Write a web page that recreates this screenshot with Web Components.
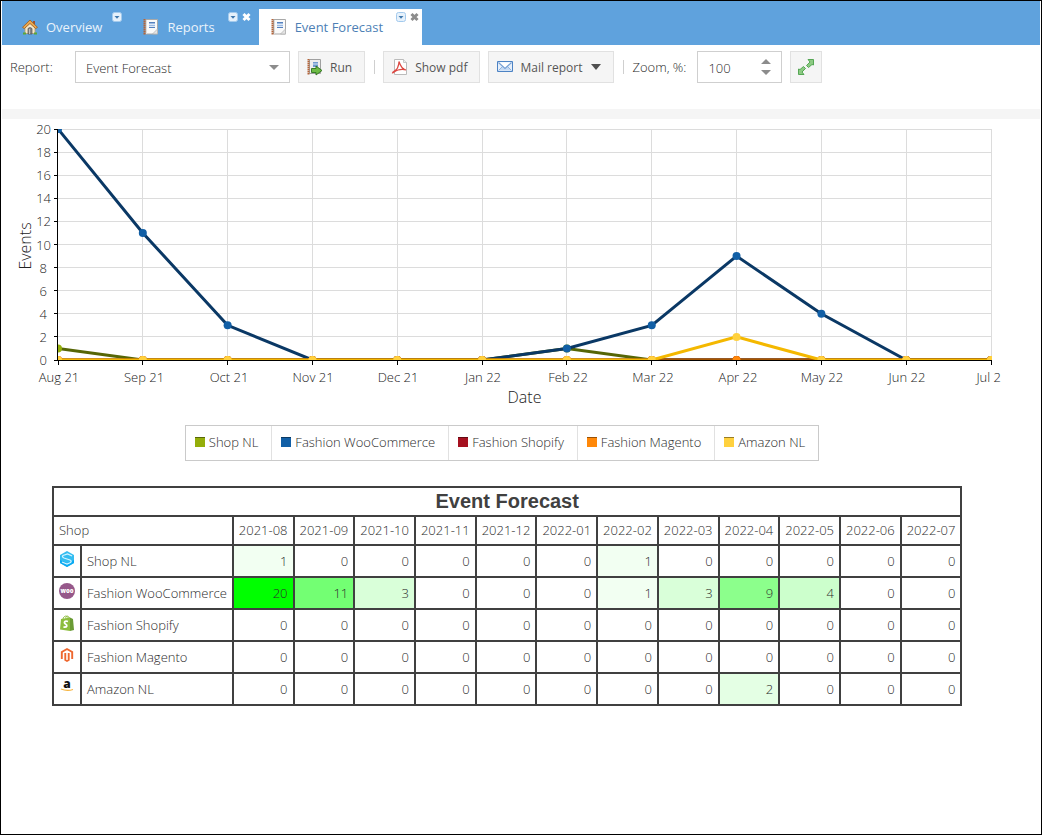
<!DOCTYPE html>
<html lang="en">
<head>
<meta charset="utf-8">
<title>Event Forecast</title>
<style>
    * { box-sizing: border-box; }
    html { height: 100%; }
    body {
        margin: 0;
        min-height: 100%;
        padding: 0 1px;
        border: 1px solid #000;
        background: #fff;
        font: 300 13px/17px "Open Sans", sans-serif;
        color: #2c2c2c;
    }
</style>
</head>
<body>
<tab-bar>
    <app-tab icon="home">Overview</app-tab>
    <app-tab icon="report" closable>Reports</app-tab>
    <app-tab icon="report" closable active>Event Forecast</app-tab>
</tab-bar>
<report-toolbar></report-toolbar>
<report-view>
    <line-chart></line-chart>
    <chart-legend></chart-legend>
    <forecast-table></forecast-table>
</report-view>

<script>
const ICONS = {
    home: `<path d="M11 2h2v4l-2-2z" fill="#a0522d"/>
        <path d="M3 8v6.500h10V8L8 3.500z" fill="#f3e8ca" stroke="#b99a68" stroke-width=".8"/>
        <path d="M0.500 8.300 8 1l7.500 7.300-1.800 1.300L8 4.500 2.300 9.600z" fill="#e9a64e" stroke="#9c6426" stroke-width=".9"/>
        <path d="M6 15V9.500q2-2 4 0V15z" fill="#858585" stroke="#555" stroke-width=".7"/>
        <path d="M7.500 10v5" stroke="#bbb"/>
        <path d="M1 13.500h3v2H1zM12 13.500h3v2h-3z" fill="#59a63a"/>`,
    report: `<path d="M2.500.500h12v14.500h-12z" fill="#fafafa" stroke="#a8a8a8"/>
        <path d="M14.500 10v5H9.500z" fill="#e4e4e4" stroke="#b5b5b5" stroke-width=".8"/>
        <path d="M1.500 0v16" stroke="#b4653a" stroke-width="2" stroke-dasharray="1.500 .5"/>
        <path d="M3.500 1v14" stroke="#ddd"/>
        <path d="M6 3.500h6v5H6z" fill="#9dbbe2"/>
        <path d="M6 5.500h6M6 7.500h6" stroke="#eef4fb" stroke-width=".8"/><path d="M6 3.500h6M6 8.500h6" stroke="#5580bd"/>`,
    run: `<path d="M2.500.500h11v14h-11z" fill="#eee" stroke="#a0a0a0"/>
        <path d="M1.500 0v16" stroke="#b4653a" stroke-width="2" stroke-dasharray="1.500 .5"/>
        <path d="M6 3h5v5H6z" fill="#6f9bd0"/><path d="M6 5h5" stroke="#eef4fb" stroke-width=".8"/>
        <path d="M4.500 9.500H9V7l6 4.500L9 16v-2.500H4.500z" fill="#6dbb45" stroke="#2b721b" stroke-width=".9"/>`,
    pdf: `<path d="M2.500.500h9l3 3v12h-12z" fill="#fff" stroke="#bbb"/>
        <path d="M11.500.500v3h3" fill="#eee" stroke="#bbb" stroke-width=".8"/>
        <path d="M7 2.500c1.500 5 3 7.500 7 8.500-3-1-6-.500-8 0-3 1-4.500 3-5.500 3 0-1.500 4-2.500 5-5C6.500 6.500 7 4.500 7 2.500z" fill="none" stroke="#dc4842" stroke-width="1.200"/>`,
    mail: `<path d="M.500 2.500h15v10H.500z" fill="#e7f0fb" stroke="#4d83c4"/>
        <path d="M1.500 11.500 6 7l2 1.500L10 7l4.500 4.500" fill="#c5daf4" stroke="#8eb3df"/>
        <path d="M1.500 3.500 8 9.500l6.500-6" fill="#fff" stroke="#77a1d5" stroke-width="1.200"/>`,
    expand: `<path d="M10 .500h5.500V6l-1.500-.5-3.500 3-2-2L12 3z" fill="#8dca83" stroke="#4aa04a" stroke-width=".9"/>
        <path d="M6 15.500H.500V10l1.500.5 3.500-3 2 2L4 13z" fill="#8dca83" stroke="#4aa04a" stroke-width=".9"/>`,
    shop: `<path d="M8 0l7 4v8l-7 4-7-4V4z" fill="#35bdf1"/><path d="M1 9l7 3 7-3v3l-7 4-7-4z" fill="#0aa9f2"/>
        <path d="M13 5 8.500 3 4 4.500Q2.500 6 5 7l6 2q2 1 .5 2.500L8 13l-5-2" fill="none" stroke="#d3f4ff" stroke-width="1.300"/>`,
    woo: `<circle cx="8" cy="8" r="8" fill="#96588a"/>
        <text x="8" y="10" text-anchor="middle" font-family="Open Sans, sans-serif" font-weight="800" font-size="6" fill="#fff">woo</text>`,
    shopify: `<path d="M2 4 11 2.500V16L1 14.500z" fill="#8dbd3d"/><path d="M11 2.500l3 1.500 1 11-4 1z" fill="#6a9b35"/>
        <path d="M4 4C4.500 1 8-.500 9.500 3.500M6.500 3.500C7 1 9 0 10.500 3" fill="none" stroke="#8dbd3d" stroke-width="1"/>
        <path d="M9 6.500C5.500 5.300 4.500 7.800 6.500 9S8.500 12.500 4.500 12" fill="none" stroke="#fff" stroke-width="1.800"/>`,
    magento: `<path d="M2.800 12V5L8 2l5.200 3v7" fill="none" stroke="#ee672f" stroke-width="1.900"/>
        <path d="M6.200 6v7L8 14l1.800-1V6" fill="none" stroke="#ee672f" stroke-width="1.700"/><path d="M8 6v6" stroke="#f8c6ac" stroke-width="1"/>`,
    amazon: `<text x="8" y="9" text-anchor="middle" font-family="Open Sans, sans-serif" font-weight="800" font-size="12" fill="#111">a</text>
        <path d="M2 10q6 2.500 12 .5" fill="none" stroke="#f6b440" stroke-width="1.200"/>`
};

const icon = name => `<svg class="icon" width="16" height="16" viewBox="0 0 16 16" overflow="visible" aria-hidden="true">${ICONS[name]}</svg>`;

const MONTHS = ['2021-08', '2021-09', '2021-10', '2021-11', '2021-12', '2022-01', '2022-02', '2022-03', '2022-04', '2022-05', '2022-06', '2022-07'];
const LABELS = ['Aug 21', 'Sep 21', 'Oct 21', 'Nov 21', 'Dec 21', 'Jan 22', 'Feb 22', 'Mar 22', 'Apr 22', 'May 22', 'Jun 22', 'Jul 2'];
const SHOPS = [
    { name: 'Shop NL', icon: 'shop', color: '#94ae0a', line: '#566606', data: [1, 0, 0, 0, 0, 0, 1, 0, 0, 0, 0, 0] },
    { name: 'Fashion WooCommerce', icon: 'woo', color: '#115fa6', line: '#0a3865', data: [20, 11, 3, 0, 0, 0, 1, 3, 9, 4, 0, 0] },
    { name: 'Fashion Shopify', icon: 'shopify', color: '#a61120', line: '#650a13', data: [0, 0, 0, 0, 0, 0, 0, 0, 0, 0, 0, 0] },
    { name: 'Fashion Magento', icon: 'magento', color: '#ff8809', line: '#a65500', data: [0, 0, 0, 0, 0, 0, 0, 0, 0, 0, 0, 0] },
    { name: 'Amazon NL', icon: 'amazon', color: '#ffd13e', line: '#f4b800', data: [0, 0, 0, 0, 0, 0, 0, 0, 2, 0, 0, 0] }
];
const HEAT = { 1: '#f2fff2', 2: '#e4ffe4', 3: '#d9ffd9', 4: '#ccffcc', 9: '#8cff8c', 11: '#73ff73', 20: '#00ff00' };

class TabBar extends HTMLElement {
    constructor() {
        super();
        this.attachShadow({ mode: 'open' });
        this.shadowRoot.innerHTML = `
            <style>
                :host {
                    display: flex;
                    align-items: stretch;
                    gap: 5px;
                    height: 44px;
                    padding: 8px 8px 0;
                    background: #5fa2dd;
                }
            </style>
            <slot></slot>
        `;
    }
}
customElements.define('tab-bar', TabBar);

class AppTab extends HTMLElement {
    constructor() {
        super();
        this.attachShadow({ mode: 'open' });
    }
    connectedCallback() {
        const closable = this.hasAttribute('closable');
        this.shadowRoot.innerHTML = `
            <style>
                :host {
                    display: flex;
                    padding: 0 4px 0 12px;
                    color: #eaf3fb;
                    font-weight: 400;
                }
                :host([closable]) { padding-right: 3px; }
                :host([active]) { background: #fff; color: #4d7fb5; }
                a {
                    display: flex;
                    align-items: center;
                    gap: 8px;
                    color: inherit;
                    text-decoration: none;
                }
                .tools {
                    display: flex;
                    gap: 4px;
                    padding-top: 3px;
                    margin-left: 10px;
                }
                :host([closable]) .tools { margin-left: 13px; }
                button {
                    display: block;
                    height: 10px;
                    padding: 0;
                    border: 0;
                    background: none;
                    color: #fff;
                }
                :host([active]) button { color: #8c8c8c; }
                button svg { display: block; }
            </style>
            <a href="#">${icon(this.getAttribute('icon'))}<span><slot></slot></span></a>
            <div class="tools">
                <button type="button" aria-label="Tab menu"><svg width="10" height="10" viewBox="0 0 10 10"><rect x=".5" y=".5" width="9" height="9" rx="2" fill="#e6f1fb" stroke="#a3caed"/><path d="M2.500 4h5L5 6.700z" fill="#3f78ad"/></svg></button>
                ${closable ? '<button type="button" aria-label="Close tab"><svg width="9" height="10" viewBox="0 0 9 10"><path d="M1.500 2l6 6M7.500 2l-6 6" stroke="currentColor" stroke-width="3"/></svg></button>' : ''}
            </div>
        `;
    }
}
customElements.define('app-tab', AppTab);

class ToolButton extends HTMLElement {
    constructor() {
        super();
        this.attachShadow({ mode: 'open' });
    }
    connectedCallback() {
        const label = this.getAttribute('label') || '';
        const text = this.textContent.trim();
        this.shadowRoot.innerHTML = `
            <style>
                :host { display: block; }
                button {
                    display: flex;
                    align-items: center;
                    gap: 7px;
                    height: 32px;
                    padding: 0 12px 0 8px;
                    border: 1px solid #e1e1e1;
                    background: #f5f5f5;
                    font: 400 12px/17px "Open Sans", sans-serif;
                    color: #555;
                }
                button.bare { padding: 0 7px; }
                .arrow { margin-left: 2px; }
            </style>
            <button type="button" class="${text ? '' : 'bare'}" ${label ? `aria-label="${label}"` : ''}>
                ${icon(this.getAttribute('icon'))}
                ${text ? '<span><slot></slot></span>' : ''}
                ${this.hasAttribute('menu') ? '<svg class="arrow" width="10" height="6"><path d="M0 0h10L5 6z" fill="#505050"/></svg>' : ''}
            </button>
        `;
    }
}
customElements.define('tool-button', ToolButton);

class ReportToolbar extends HTMLElement {
    constructor() {
        super();
        this.attachShadow({ mode: 'open' });
        this.shadowRoot.innerHTML = `
            <style>
                * { box-sizing: border-box; }
                :host {
                    display: flex;
                    align-items: center;
                    gap: 8px;
                    height: 74px;
                    padding: 0 8px 20px;
                    border-bottom: 10px solid #f5f5f5;
                }
                .field { position: relative; height: 32px; }
                select, input {
                    appearance: none;
                    display: block;
                    width: 100%;
                    height: 32px;
                    margin: 0;
                    padding: 2px 10px 0;
                    border: 1px solid #cfcfcf;
                    border-radius: 0;
                    background: #fff;
                    font: 300 13px/17px "Open Sans", sans-serif;
                    color: #2c2c2c;
                }
                input { appearance: textfield; }
                input::-webkit-inner-spin-button { display: none; }
                .field svg { position: absolute; right: 11px; top: 0; height: 32px; pointer-events: none; }
                .report { width: 57px; }
                .combo { width: 215px; }
                .zoom { margin-right: 3px; }
                .spin { width: 85px; }
                .sep { width: 2px; height: 14px; border-right: 1px solid #cfcfcf; }
            </style>
            <label class="report" for="report">Report:</label>
            <div class="field combo">
                <select id="report"><option>Event Forecast</option></select>
                <svg width="10" height="32"><path d="M0 14h10l-5 5z" fill="#8c8c8c"/></svg>
            </div>
            <tool-button icon="run">Run</tool-button>
            <span class="sep"></span>
            <tool-button icon="pdf">Show pdf</tool-button>
            <tool-button icon="mail" menu>Mail report</tool-button>
            <span class="sep"></span>
            <label class="zoom" for="zoom">Zoom, %:</label>
            <div class="field spin">
                <input id="zoom" type="number" value="100">
                <svg width="10" height="32"><path d="M0 13h10L5 8zM0 19h10l-5 5z" fill="#8c8c8c"/></svg>
            </div>
            <tool-button icon="expand" label="Expand"></tool-button>
        `;
    }
}
customElements.define('report-toolbar', ReportToolbar);

class ReportView extends HTMLElement {
    constructor() {
        super();
        this.attachShadow({ mode: 'open' });
        this.shadowRoot.innerHTML = `
            <style>
                :host {
                    display: flex;
                    flex-direction: column;
                    padding: 0 38px 24px 0;
                }
            </style>
            <slot></slot>
        `;
    }
}
customElements.define('report-view', ReportView);

class LineChart extends HTMLElement {
    constructor() {
        super();
        this.attachShadow({ mode: 'open' });
        this.shadowRoot.innerHTML = `
            <style>
                :host { display: block; height: 306px; }
                svg { display: block; width: 100%; height: 100%; overflow: hidden; }
                text { font: 300 13px "Open Sans", sans-serif; fill: #222; }
                .title { font-size: 16px; }
                .grid { stroke: #dcdcdc; shape-rendering: crispEdges; }
                .axis { stroke: #000; shape-rendering: crispEdges; }
            </style>
            <svg role="img" aria-label="Events by date"></svg>
        `;
    }
    connectedCallback() {
        this.draw();
        this.observer = new ResizeObserver(() => this.draw());
        this.observer.observe(this);
    }
    disconnectedCallback() {
        this.observer.disconnect();
    }
    draw() {
        const left = 56, top = 10, bottom = 241;
        const right = this.clientWidth - 11;
        const last = LABELS.length - 1;
        const x = i => left + (right - left) * i / last;
        const y = v => bottom - (bottom - top) * v / 20;
        const px = n => Math.floor(n) + 0.5;
        let grid = '', axis = '', text = '';

        for (let v = 0; v <= 20; v += 2) {
            if (v) grid += `<path d="M${left} ${px(y(v))}H${right}"/>`;
            axis += `<path d="M${left - 4} ${px(y(v))}h4"/>`;
            text += `<text x="${v < 10 ? 45 : 49}" y="${Math.round(y(v)) + 5}" text-anchor="end">${v}</text>`;
        }
        LABELS.forEach((label, i) => {
            if (i) grid += `<path d="M${px(x(i))} ${top}V${bottom}"/>`;
            axis += `<path d="M${px(x(i))} ${bottom}v5"/>`;
            // the last label ends at the chart's edge
            text += i < last
                ? `<text x="${Math.round(x(i)) + 1}" y="263" text-anchor="middle">${label}</text>`
                : `<text x="${right + 10}" y="263" text-anchor="end">${label}</text>`;
        });
        axis += `<path d="M${px(left - 1)} ${top}V${bottom}M${left} ${px(bottom)}H${right}"/>`;

        const lines = SHOPS.map(s => `<polyline fill="none" stroke="${s.line}" stroke-width="3" points="${s.data.map((v, i) => x(i) + ',' + y(v)).join(' ')}"/>`
            + s.data.map((v, i) => `<circle cx="${x(i)}" cy="${y(v)}" r="4" fill="${s.color}"/>`).join('')).join('');

        this.shadowRoot.querySelector('svg').innerHTML = `
            <clipPath id="plot"><path d="M${left} ${top}H${right + 1}V${bottom}H${left}z"/></clipPath>
            <g class="grid">${grid}</g>
            <g clip-path="url(#plot)">${lines}</g>
            <g class="axis">${axis}</g>
            ${text}
            <text class="title" x="${(left + right) / 2}" y="284" text-anchor="middle">Date</text>
            <text class="title" transform="translate(29 127) rotate(-90)" text-anchor="middle">Events</text>
        `;
    }
}
customElements.define('line-chart', LineChart);

class ChartLegend extends HTMLElement {
    constructor() {
        super();
        this.attachShadow({ mode: 'open' });
        this.shadowRoot.innerHTML = `
            <style>
                :host {
                    display: flex;
                    align-self: center;
                    height: 36px;
                    border: 1px solid #cacaca;
                }
                .item {
                    display: flex;
                    align-items: center;
                    gap: 4px;
                    padding: 0 13px 2px 9px;
                    border-left: 1px solid #e1e1e1;
                }
                .item:first-of-type { border-left: 0; }
                i {
                    width: 10px;
                    height: 10px;
                    box-shadow: inset 0 1px rgba(0, 0, 0, .4);
                }
            </style>
            ${SHOPS.map(s => `<div class="item"><i style="background:${s.color}"></i><span>${s.name}</span></div>`).join('')}
        `;
    }
}
customElements.define('chart-legend', ChartLegend);

class ForecastTable extends HTMLElement {
    constructor() {
        super();
        this.attachShadow({ mode: 'open' });
        this.shadowRoot.innerHTML = `
            <style>
                :host { display: block; margin: 25px 0 0 50px; }
                table { border-collapse: collapse; white-space: nowrap; }
                th, td {
                    height: 17px;
                    padding: 5px;
                    border: 2px solid #404040;
                    font-weight: 300;
                    text-align: left;
                }
                .title th {
                    font: bold 20px/17px "Liberation Sans", sans-serif;
                    color: #404040;
                    text-align: center;
                }
                tbody th, tbody td { height: 20px; }
                tbody td { text-align: right; }
                tbody td.logo { vertical-align: top; }
                svg { display: block; }
            </style>
            <table>
                <thead>
                    <tr class="title"><th colspan="14">Event Forecast</th></tr>
                    <tr><th colspan="2">Shop</th>${MONTHS.map(m => `<th>${m}</th>`).join('')}</tr>
                </thead>
                <tbody>
                    ${SHOPS.map(s => `<tr>
                        <td class="logo">${icon(s.icon)}</td><th>${s.name}</th>
                        ${s.data.map(v => `<td${v ? ` style="background:${HEAT[v]}"` : ''}>${v}</td>`).join('')}
                    </tr>`).join('')}
                </tbody>
            </table>
        `;
    }
}
customElements.define('forecast-table', ForecastTable);
</script>
</body>
</html>
